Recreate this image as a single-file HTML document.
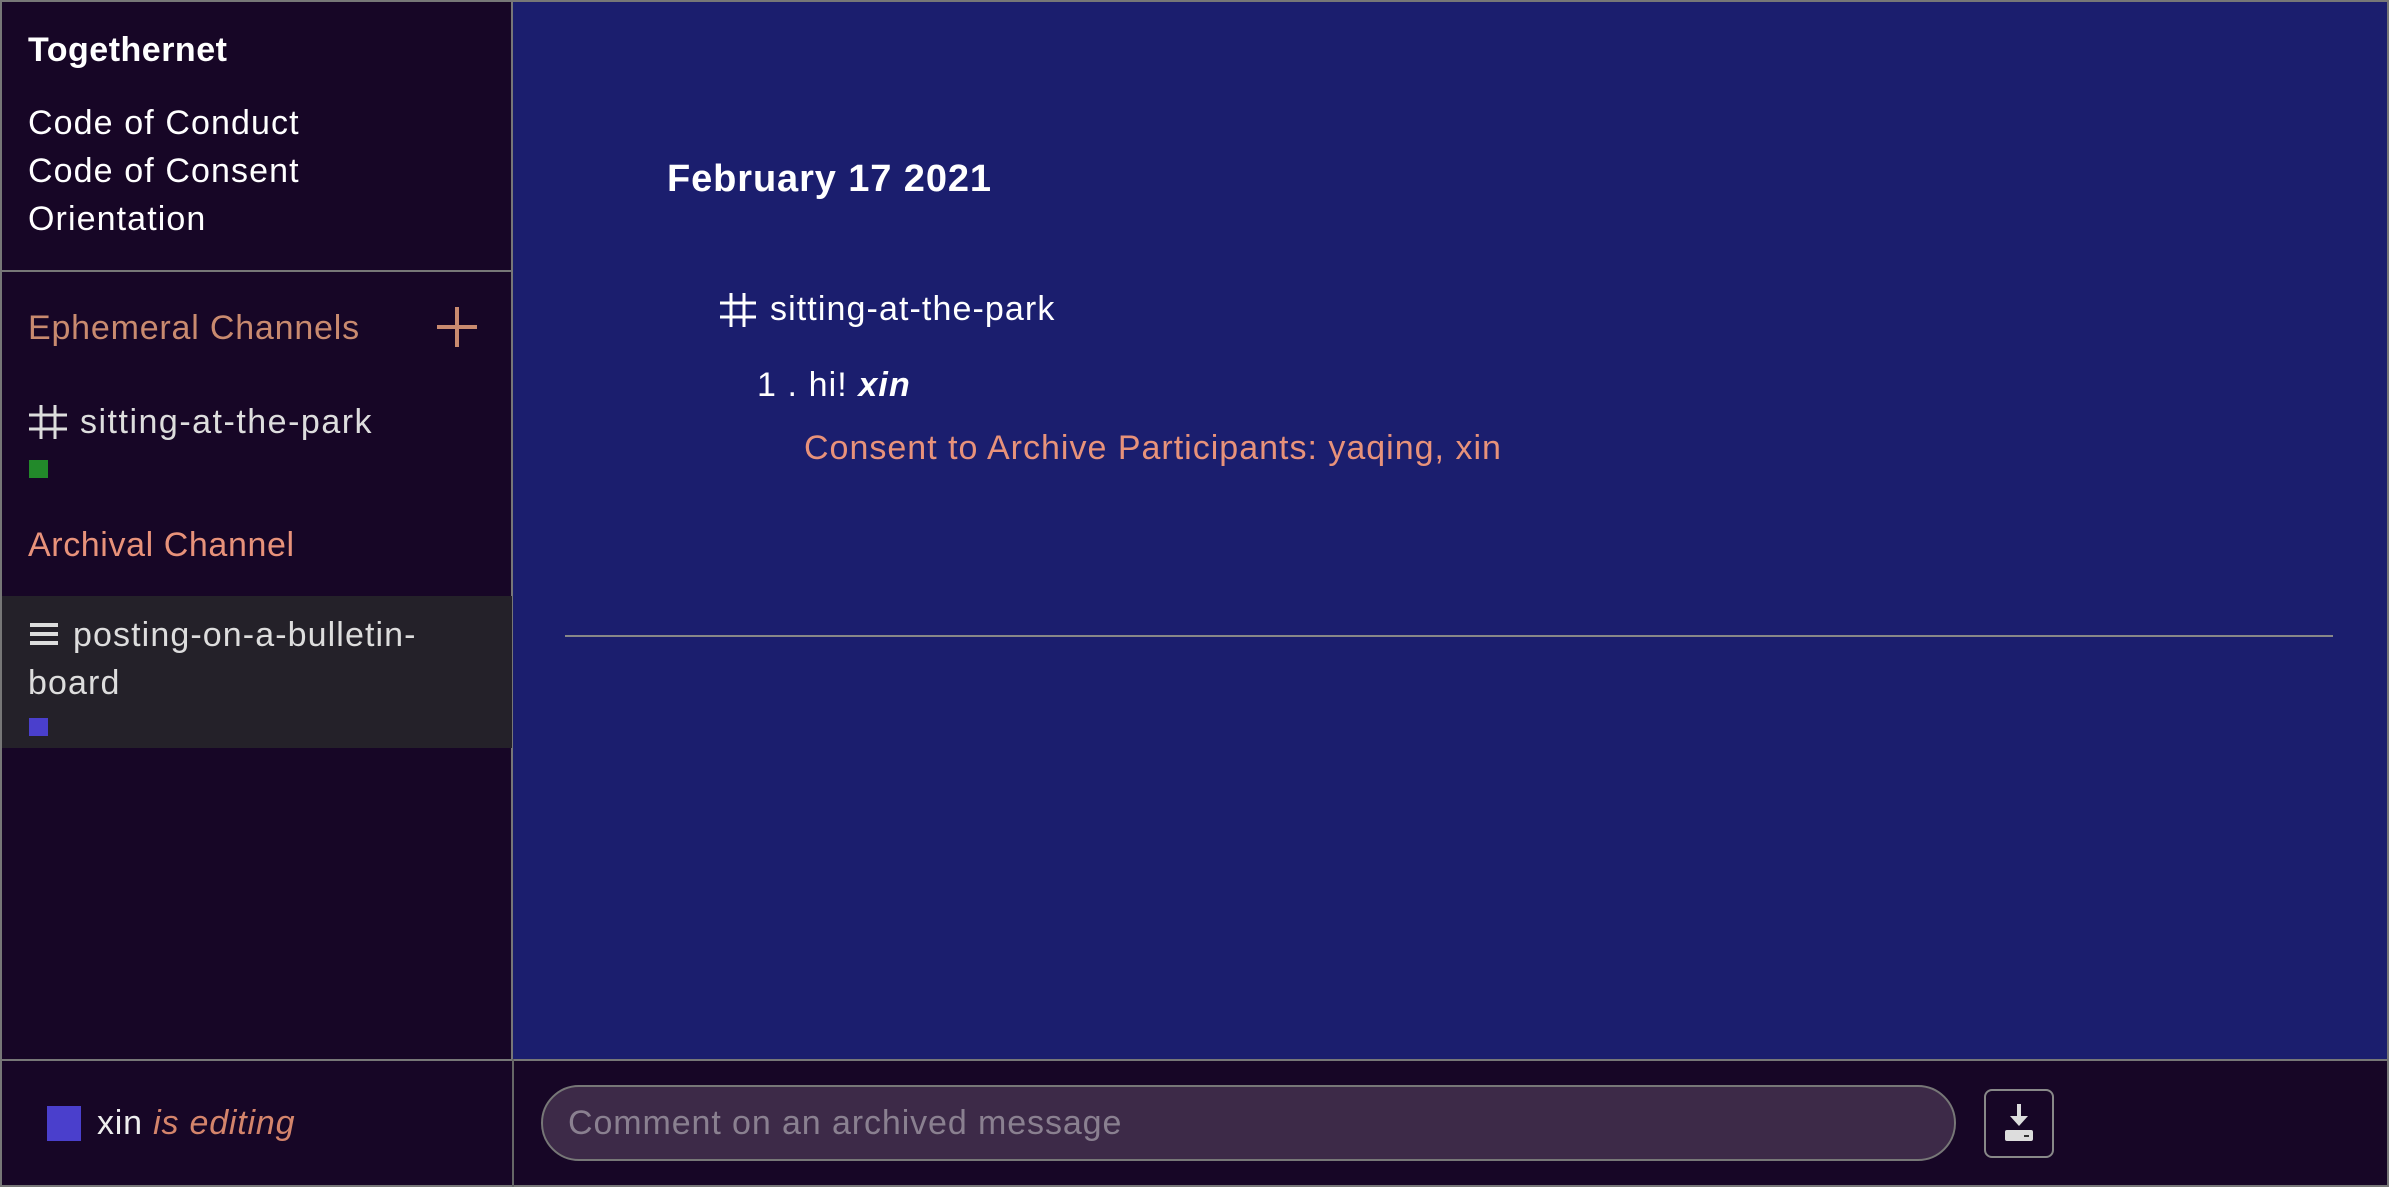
<!DOCTYPE html>
<html><head><meta charset="utf-8"><style>
*{margin:0;padding:0;box-sizing:border-box}
body{width:2389px;height:1187px;overflow:hidden;background:#16052a;font-family:"Liberation Sans",sans-serif;position:relative}
.a{position:absolute;white-space:nowrap;line-height:48px;letter-spacing:1.1px}
#side{position:absolute;left:0;top:0;width:513px;height:1061px;background:#170626;border:2px solid #777;border-right:2px solid #777}
#main{position:absolute;left:513px;top:0;width:1876px;height:1061px;background:#1b1e6e;border-top:2px solid #777;border-right:2px solid #777}
#bot{position:absolute;left:0;top:1059px;width:2389px;height:128px;background:#170626;border:2px solid #777}
.w{color:#fff;font-size:34px}
svg.h{position:absolute}
</style></head><body>
<div id="side"></div>
<div id="main"></div>
<div id="bot"></div>
<div style="position:absolute;left:512px;top:1059px;width:2px;height:128px;background:#666"></div>
<div class="a w" style="left:28px;top:26px;font-weight:bold;font-size:34px;letter-spacing:0.5px">Togethernet</div>
<div class="a w" style="left:28px;top:99px">Code of Conduct</div>
<div class="a w" style="left:28px;top:147px">Code of Consent</div>
<div class="a w" style="left:28px;top:195px">Orientation</div>
<div style="position:absolute;left:2px;top:270px;width:510px;height:2px;background:#777"></div>
<div class="a" style="left:28px;top:304px;font-size:34px;color:#c98a6f;letter-spacing:0.8px">Ephemeral Channels</div>
<div style="position:absolute;left:437px;top:325px;width:40px;height:4px;background:#c98a6f"></div>
<div style="position:absolute;left:455px;top:307px;width:4px;height:40px;background:#c98a6f"></div>
<svg class="h" style="left:29px;top:405px" width="38" height="34" viewBox="0 0 38 34"><path d="M12 0v34M26 0v34M0 10h38M0 24h38" stroke="#ddd" stroke-width="3"/></svg>
<div class="a" style="left:80px;top:398px;font-size:34px;color:#ddd;letter-spacing:1.5px">sitting-at-the-park</div>
<div style="position:absolute;left:29px;top:460px;width:19px;height:18px;background:#22892a"></div>
<div class="a" style="left:28px;top:521px;font-size:34px;color:#e8927a;letter-spacing:0.6px">Archival Channel</div>
<div style="position:absolute;left:2px;top:596px;width:510px;height:152px;background:#242129"></div>
<svg class="h" style="left:30px;top:622px" width="28" height="24" viewBox="0 0 28 24"><path d="M0 3h28M0 12h28M0 21h28" stroke="#ddd" stroke-width="4"/></svg>
<div class="a" style="left:73px;top:611px;font-size:34px;color:#ddd">posting-on-a-bulletin-</div>
<div class="a" style="left:28px;top:659px;font-size:34px;color:#ddd">board</div>
<div style="position:absolute;left:29px;top:718px;width:19px;height:18px;background:#4a3fcc"></div>
<div class="a w" style="left:667px;top:155px;font-weight:bold;font-size:38px;letter-spacing:0.9px">February 17 2021</div>
<svg class="h" style="left:720px;top:293px" width="36" height="34" viewBox="0 0 36 34"><path d="M11 0v34M24 0v34M0 10h36M0 24h36" stroke="#fff" stroke-width="3"/></svg>
<div class="a w" style="left:770px;top:285px">sitting-at-the-park</div>
<div class="a w" style="left:757px;top:361px">1 . hi! <b><i>xin</i></b></div>
<div class="a" style="left:804px;top:424px;font-size:34px;color:#e8927a;letter-spacing:1.0px">Consent to Archive Participants: yaqing, xin</div>
<div style="position:absolute;left:565px;top:635px;width:1768px;height:2px;background:#888"></div>
<div style="position:absolute;left:47px;top:1106px;width:34px;height:35px;background:#4a3fcc"></div>
<div class="a" style="left:97px;top:1099px;font-size:34px;color:#eee;letter-spacing:0.8px">xin <i style="color:#d4846b">is editing</i></div>
<div style="position:absolute;left:541px;top:1085px;width:1415px;height:76px;background:#3d2a48;border:2px solid #777;border-radius:38px"></div>
<div class="a" style="left:568px;top:1099px;font-size:34px;color:#8a8090;letter-spacing:0.9px">Comment on an archived message</div>
<div style="position:absolute;left:1984px;top:1089px;width:70px;height:69px;border:2px solid #888;border-radius:8px"></div>
<svg style="position:absolute;left:2000px;top:1102px" width="38" height="42" viewBox="0 0 38 42"><path d="M19 2v18" stroke="#ddd" stroke-width="4"/><path d="M10 14l9 10 9-10z" fill="#ddd"/><rect x="5" y="28" width="28" height="11" rx="2" fill="#ddd"/><rect x="24" y="33" width="5" height="2" fill="#333"/></svg>
</body></html>
